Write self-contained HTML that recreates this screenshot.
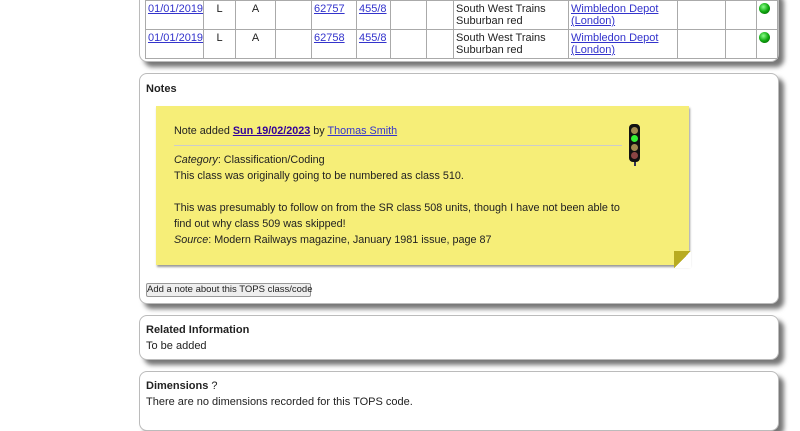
<!DOCTYPE html>
<html><head><style>
body{margin:0;background:#fff;font-family:"Liberation Sans",Arial,sans-serif;font-size:11px;color:#222;width:800px;height:411px;overflow:hidden;position:relative}
.panel{position:absolute;left:139px;width:640px;background:#fff;border:1px solid #bbb;border-radius:8px;box-shadow:5px 5px 5px #777;box-sizing:border-box}
a{color:#33c}
table{border-collapse:collapse;position:absolute;left:5px;table-layout:fixed;width:632px}
td{border:1px solid #aaa;vertical-align:top;padding:2px 2px;font-size:11px;line-height:12px;height:27px;box-sizing:border-box;white-space:normal}
h4{margin:0;font-size:11px;font-weight:bold;position:absolute;left:6px}
.sticky{position:absolute;left:16px;top:32px;width:533px;height:159px;background:#f6ee78;box-shadow:1px 2px 2px #999;font-size:10.8px}
.dot{width:11px;height:11px;border-radius:50%;background:radial-gradient(circle at 40% 35%,#8f8,#1a1 50%,#050)}
</style></head><body>
<div class="panel" style="top:-10px;height:72px">
<table style="top:9px">
<colgroup><col style="width:58px"><col style="width:32px"><col style="width:40px"><col style="width:36px"><col style="width:45px"><col style="width:34px"><col style="width:36px"><col style="width:27px"><col style="width:115px"><col style="width:109px"><col style="width:48px"><col style="width:31px"><col style="width:21px"></colgroup>
<tr><td style="padding-left:2px;padding-right:0;white-space:nowrap"><a href="#">01/01/2019</a></td><td style="text-align:center">L</td><td style="text-align:center">A</td><td></td><td><a href="#">62757</a></td><td><a href="#">455/8</a></td><td></td><td></td><td>South West Trains Suburban red</td><td><a href="#">Wimbledon Depot (London)</a></td><td></td><td></td><td><div class="dot"></div></td></tr>
<tr><td style="padding-left:2px;padding-right:0;white-space:nowrap"><a href="#">01/01/2019</a></td><td style="text-align:center">L</td><td style="text-align:center">A</td><td></td><td><a href="#">62758</a></td><td><a href="#">455/8</a></td><td></td><td></td><td>South West Trains Suburban red</td><td><a href="#">Wimbledon Depot (London)</a></td><td></td><td></td><td><div class="dot"></div></td></tr>
</table></div>

<div class="panel" style="top:73px;height:231px">
<h4 style="top:9px">Notes</h4>
<div class="sticky">
<div style="position:absolute;left:18px;top:19px">Note added <a href="#" style="color:#309;font-weight:bold">Sun 19/02/2023</a> by <a href="#">Thomas Smith</a></div>
<div style="position:absolute;left:18px;top:39px;width:448px;border-top:1px solid #ccc"></div>
<div style="position:absolute;left:18px;top:46px;line-height:16px"><i>Category</i>: Classification/Coding<br>This class was originally going to be numbered as class 510.<br><br>This was presumably to follow on from the SR class 508 units, though I have not been able to<br>find out why class 509 was skipped!<br><i>Source</i>: Modern Railways magazine, January 1981 issue, page 87</div>
<div style="position:absolute;left:473px;top:18px;width:11px;height:38px;background:#111;border-radius:4px"></div>
<div style="position:absolute;left:475px;top:21px;width:7px;height:7px;border-radius:50%;background:#a08850"></div>
<div style="position:absolute;left:475px;top:29px;width:7px;height:7px;border-radius:50%;background:#3e3"></div>
<div style="position:absolute;left:475px;top:38px;width:7px;height:7px;border-radius:50%;background:#a08850"></div>
<div style="position:absolute;left:475px;top:46px;width:7px;height:7px;border-radius:50%;background:#8a4444"></div>
<div style="position:absolute;left:478px;top:56px;width:2px;height:4px;background:#335"></div>
<div style="position:absolute;right:-2px;bottom:-3px;width:17px;height:17px;background:linear-gradient(to bottom right,#b8ab20 50%,#fff 50%)"></div>
</div>
<div style="position:absolute;left:6px;top:209px;height:14px;width:165px;border:1px solid #999;border-radius:2px;background:#eee;font-size:9.5px;line-height:12px;text-align:center;box-sizing:border-box;white-space:nowrap">Add a note about this TOPS class/code</div>
</div>

<div class="panel" style="top:315px;height:45px">
<h4 style="top:8px">Related Information</h4>
<div style="position:absolute;left:6px;top:24px">To be added</div>
</div>

<div class="panel" style="top:371px;height:60px">
<h4 style="top:8px">Dimensions <span style="font-weight:normal">?</span></h4>
<div style="position:absolute;left:6px;top:24px">There are no dimensions recorded for this TOPS code.</div>
</div>
</body></html>
